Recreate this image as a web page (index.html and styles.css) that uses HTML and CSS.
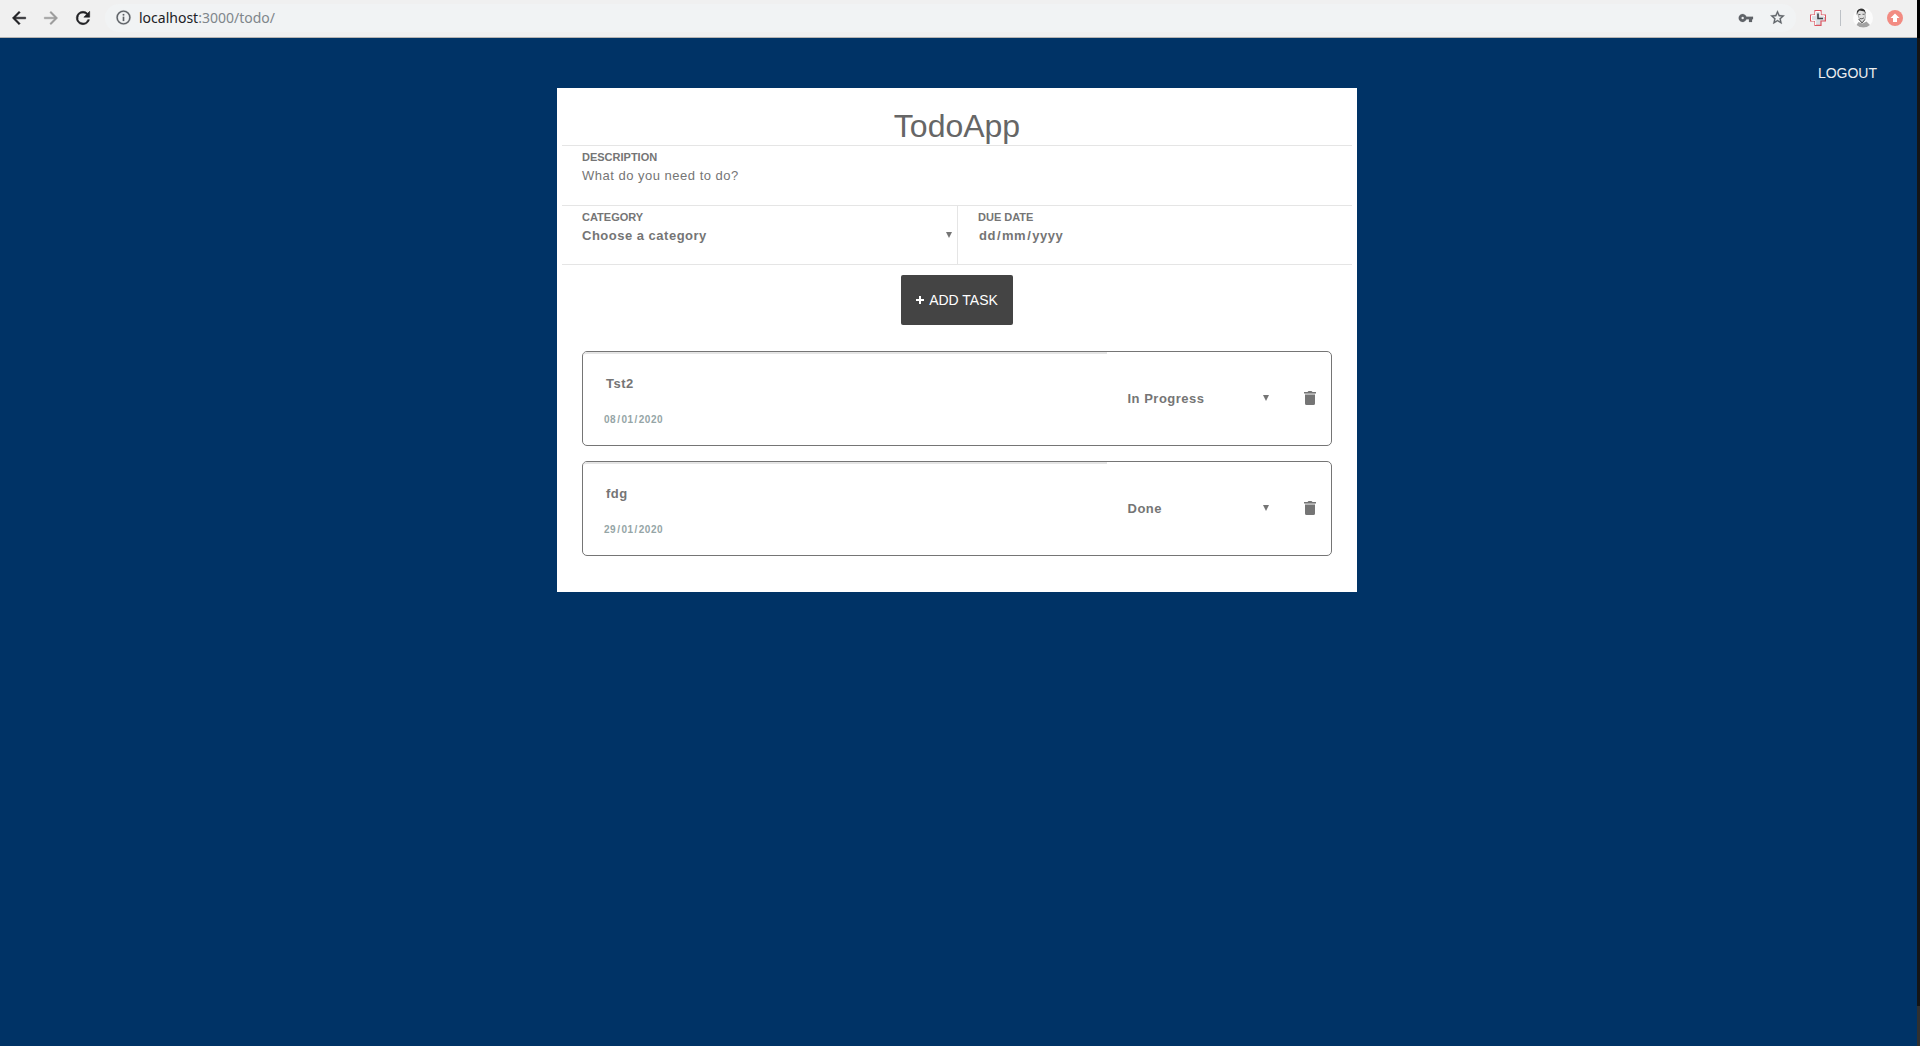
FILE: index.html
```html
<!DOCTYPE html>
<html lang="en">
<head>
<meta charset="utf-8">
<title>TodoApp</title>
<link rel="stylesheet" href="styles.css">
</head>
<body>
<div class="window">
  <header class="toolbar">
    <div class="nav">
      <svg class="icon" viewBox="0 0 24 24"><path d="M20 11H7.83l5.59-5.59L12 4l-8 8 8 8 1.41-1.41L7.83 13H20z" stroke="currentColor" stroke-width=".6"/></svg>
      <svg class="icon faded" viewBox="0 0 24 24"><path d="M12 4l-1.41 1.41L16.17 11H4v2h12.17l-5.58 5.59L12 20l8-8z" stroke="currentColor" stroke-width=".5"/></svg>
      <svg class="icon" viewBox="0 0 24 24"><path d="M17.65 6.35A7.96 7.96 0 0 0 12 4a8 8 0 1 0 7.73 10h-2.08A6 6 0 1 1 12 6c1.66 0 3.14.69 4.22 1.78L13 11h7V4z" stroke="currentColor" stroke-width=".7"/></svg>
    </div>
    <div class="address">
      <svg class="info" viewBox="0 0 24 24"><path d="M11 17h2v-6h-2zm1-15a10 10 0 1 0 0 20 10 10 0 0 0 0-20zm0 18a8 8 0 1 1 0-16 8 8 0 0 1 0 16zM11 9h2V7h-2z" stroke="currentColor" stroke-width=".3"/></svg>
      <span class="url"><b>localhost</b>:3000/todo/</span>
      <svg class="key" viewBox="0 0 24 24"><path d="M12.650 10A6 6 0 1 0 12.650 14H16.500V18h4.500v-4H22.500v-4zM7 14a2 2 0 1 1 0-4 2 2 0 0 1 0 4z" stroke="currentColor" stroke-width=".3"/></svg>
      <svg class="star" viewBox="0 0 24 24"><path d="M22 9.24l-7.19-.62L12 2 9.19 8.63 2 9.24l5.46 4.73L5.82 21 12 17.27 18.18 21l-1.63-7.03zM12 15.4l-3.76 2.27 1-4.28-3.32-2.88 4.38-.38L12 6.1l1.71 4.04 4.38.38-3.32 2.88 1 4.28z" stroke="currentColor" stroke-width=".4"/></svg>
    </div>
    <svg class="extension" viewBox="0 0 16 16"><path d="M5 .6h6v4.4h4.400v6H11v4.400H5V11H.6V5H5z" fill="#d9dfe4" stroke="#dc5560" stroke-width="1.2"/><path d="M5.600 15V10.400H1.500V5.600H5.600V1.500h4.600v4.300h4.300V7" fill="none" stroke="#fff"/><path d="M8 3.500v5h5" fill="none" stroke="#3f4449" stroke-width="1.6"/></svg>
    <span class="separator"></span>
    <svg class="avatar" viewBox="0 0 20 20"><circle cx="10" cy="10" r="10" fill="#fbfbfb"/><path d="M3.500 17l2-3 4 1.500 4-2 3.500 3.500a10 10 0 0 1-13.500 0z" fill="#a2a2a2"/><path d="M4.500 5q0-3 3-3.500 4-.5 4.500 3l.3 5.500-2.500 4.500-3-2z" fill="#dedede" stroke="#777" stroke-width=".6"/><path d="M3.500 7L4 3Q6-.5 10 .8q3 1 2.500 5.200l-1-2.500-5-1-1.500 1.500z" fill="#333"/><path d="M5.500 6.500h2m2-.2h2M7 10.500q2 1 4-.7M5.500 11l3.500 4 3-3.500" fill="none" stroke="#444" stroke-width=".8"/></svg>
    <svg class="update" viewBox="0 0 16 16"><circle cx="8" cy="8" r="8" fill="#f28b82"/><path d="M8 3.500l4.500 4.500H10v4H6V8H3.500z" fill="#fff"/></svg>
  </header>
  <main class="page">
    <a class="logout">LOGOUT</a>
    <section class="card">
      <h1 class="title">TodoApp</h1>
      <div class="field description">
        <label class="label">DESCRIPTION</label>
        <span class="value placeholder">What do you need to do?</span>
      </div>
      <div class="split">
        <div class="field category">
          <label class="label">CATEGORY</label>
          <div class="value select"><span>Choose a category</span><svg class="caret" viewBox="0 0 6 6"><path d="M0 0h6L3 6z"/></svg></div>
        </div>
        <div class="field due">
          <label class="label">DUE DATE</label>
          <span class="value date-input">dd<i>/</i>mm<i>/</i>yyyy</span>
        </div>
      </div>
      <button class="add"><svg class="plus" viewBox="0 0 8 8"><path d="M3 0h2v3h3v2H5v3H3V5H0V3h3z"/></svg>ADD TASK</button>
      <div class="tasks">
        <article class="task">
          <div class="info-col"><span class="name">Tst2</span><span class="date">08<i>/</i>01<i>/</i>2020</span></div>
          <div class="status"><span>In Progress</span><svg class="caret" viewBox="0 0 6 6"><path d="M0 0h6L3 6z"/></svg></div>
          <svg class="trash" viewBox="0 0 12 14"><path d="M0 1h3.500L4.500 0h3l1 1H12v1.500H0zM1 3.800h10V12.500q0 1.500-1.500 1.500h-7Q1 14 1 12.500z"/><path d="M1 2.500h10v1.300H1z" opacity=".45"/></svg>
        </article>
        <article class="task">
          <div class="info-col"><span class="name">fdg</span><span class="date">29<i>/</i>01<i>/</i>2020</span></div>
          <div class="status"><span>Done</span><svg class="caret" viewBox="0 0 6 6"><path d="M0 0h6L3 6z"/></svg></div>
          <svg class="trash" viewBox="0 0 12 14"><path d="M0 1h3.500L4.500 0h3l1 1H12v1.500H0zM1 3.800h10V12.500q0 1.500-1.500 1.500h-7Q1 14 1 12.500z"/><path d="M1 2.500h10v1.300H1z" opacity=".45"/></svg>
        </article>
      </div>
    </section>
  </main>
</div>
</body>
</html>
```
FILE: styles.css
```css
* { box-sizing: border-box; }
html { background: #fff; }
body {
  margin: 0;
  height: 1046px;
  overflow: hidden;
  font-family: "Liberation Sans", Arial, sans-serif;
  color: #757575;
}
svg { display: block; flex: none; fill: currentColor; }
i { font-style: normal; padding: 0 1px; }
.window {
  height: 1046px;
  padding-right: 3px;
  background: linear-gradient(#000 0 38px, #151515 38px 1006px, #303030 1006px);
  display: flex;
  flex-direction: column;
}
.toolbar {
  height: 38px;
  flex: none;
  display: flex;
  align-items: center;
  padding: 0 14px 2px 9px;
  background: #f0f0f0;
  border-bottom: 1px solid #b6b4b2;
}
.nav { display: flex; gap: 12px; color: #202124; }
.icon { width: 20px; height: 20px; }
.faded { color: #9b9b9b; }
.address {
  flex: 1;
  height: 28px;
  margin-left: 12px;
  padding: 0 10px 0 10px;
  border-radius: 14px;
  background: #f1f3f4;
  display: flex;
  align-items: center;
  color: #5f6368;
}
.info { width: 17px; height: 17px; }
.url { flex: 1; margin-left: 7px; padding-bottom: 1px; font: 14px "Noto Sans", sans-serif; color: #80868b; }
.url b { font-weight: 400; color: #202124; }
.key { width: 16px; height: 16px; margin-right: 15px; }
.star { width: 17px; height: 17px; }
.extension { width: 16px; height: 16px; margin-left: 14px; }
.separator { width: 1px; height: 16px; margin: 0 12px 0 14px; background: #bdc1c6; }
.avatar { width: 20px; height: 20px; }
.update { width: 16px; height: 16px; margin-left: 14px; }
.page {
  flex: 1;
  background: #036;
  display: flex;
  flex-direction: column;
  align-items: center;
  padding: 26px 3px 0 0;
}
.logout { align-self: flex-end; margin-right: 37px; height: 24px; line-height: 18px; font-size: 14px; color: #eee; }
.card { width: 800px; height: 504px; background: #fff; padding: 17px 5px 0; display: flex; flex-direction: column; }
.title { margin: 0; height: 40px; line-height: 42px; font-size: 32px; font-weight: 400; text-align: center; color: #666; }
.field { padding: 5px 20px 0; display: flex; flex-direction: column; }
.description { height: 60px; border-top: 1px solid #e5e5e5; }
.split { height: 60px; display: grid; grid-template-columns: 396px 1fr; border: solid #e5e5e5; border-width: 1px 0; }
.category { border-right: 1px solid #e5e5e5; padding-right: 5px; }
.label { font-size: 11px; line-height: 13px; font-weight: 700; }
.value { margin-top: 4px; font-size: 13px; line-height: 15px; font-weight: 700; letter-spacing: .5px; }
.placeholder { font-weight: 400; }
.select { display: flex; justify-content: space-between; align-items: center; }
.caret { width: 6px; height: 6px; margin-bottom: 2px; }
.date-input { padding-left: 1px; }
.add {
  align-self: center;
  flex: none;
  width: 112px;
  height: 50px;
  margin-top: 10px;
  padding: 0;
  border: 0;
  border-radius: 2px;
  background: #444;
  color: #fff;
  font: 14px "Liberation Sans", Arial, sans-serif;
  display: flex;
  align-items: center;
  justify-content: center;
  gap: 5px;
}
.plus { width: 8px; height: 8px; }
.tasks { margin-top: 26px; padding: 0 20px; display: grid; gap: 15px; }
.task {
  height: 95px;
  border: 1px solid #757575;
  border-radius: 5px;
  display: flex;
  align-items: center;
  font-size: 13px;
  font-weight: 700;
}
.info-col { width: 524px; height: 93px; border-top: 2px solid #e5e5e5; border-top-left-radius: 4px; padding: 21px 0 0 21px; display: flex; flex-direction: column; }
.name { padding-left: 2px; line-height: 17px; letter-spacing: .5px; }
.date { margin-top: 22px; font-size: 10px; line-height: 12px; letter-spacing: .5px; color: #95a5a6; }
.status { width: 141.500px; margin-left: 20.500px; display: flex; justify-content: space-between; align-items: center; letter-spacing: .5px; }
.trash { width: 12px; height: 14px; margin: 0 0 1px 35px; }
```
